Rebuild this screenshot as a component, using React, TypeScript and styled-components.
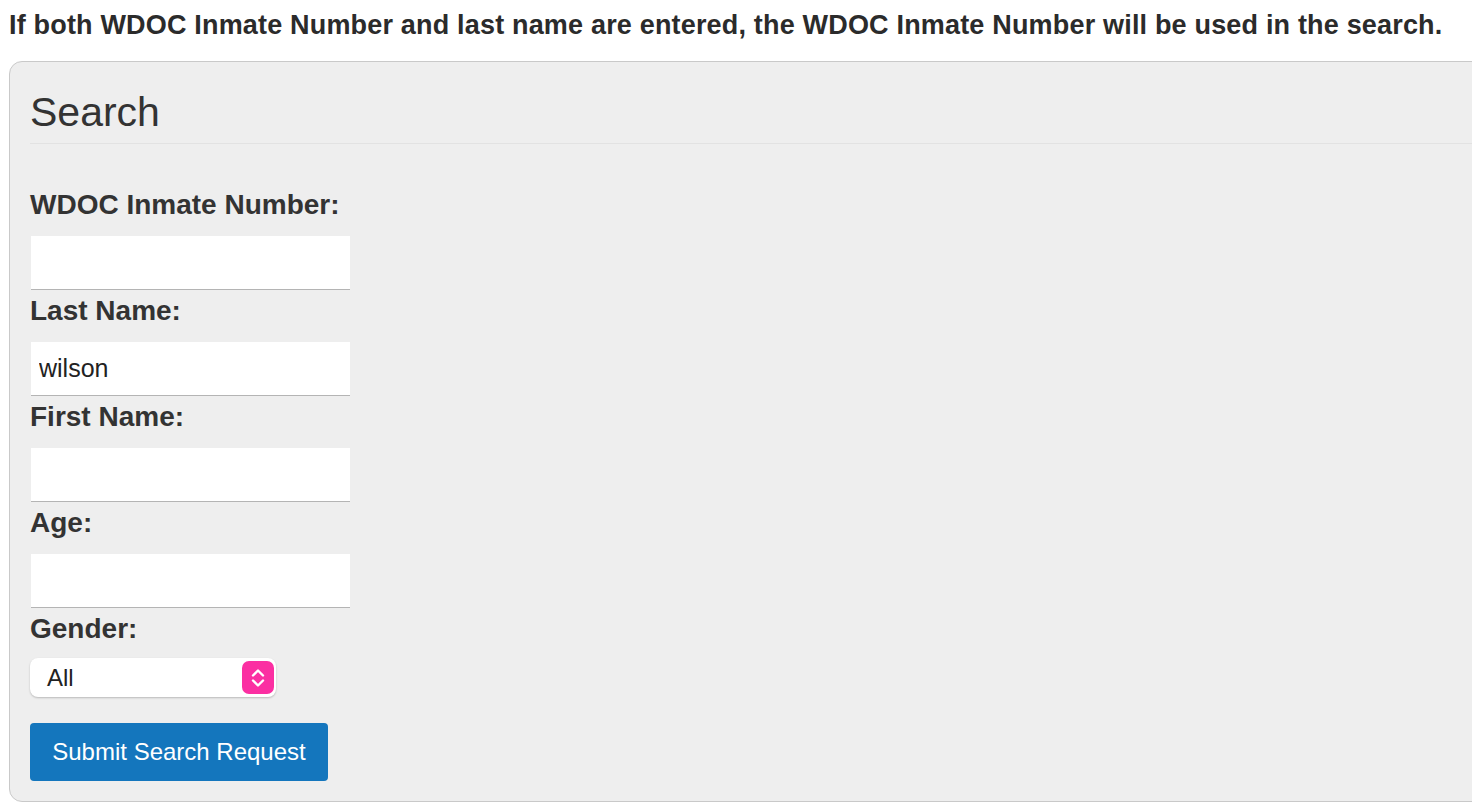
import styled, { createGlobalStyle } from 'styled-components';

const GlobalStyle = createGlobalStyle`
  html, body {
    margin: 0;
    padding: 0;
    background: #ffffff;
    overflow: hidden;
  }
  body {
    font-family: 'Liberation Sans', Helvetica, Arial, sans-serif;
    color: #333333;
  }
`;

const fields = [
  { label: 'WDOC Inmate Number:', value: '' },
  { label: 'Last Name:', value: 'wilson' },
  { label: 'First Name:', value: '' },
  { label: 'Age:', value: '' },
];

export default function App() {
  return (
    <>
      <GlobalStyle />
      <Page>
        <Intro>
          If both WDOC Inmate Number and last name are entered, the WDOC Inmate Number will be used in
          the search.
        </Intro>

        <Panel>
          <Heading>Search</Heading>

          <Form onSubmit={(e) => e.preventDefault()}>
            {fields.map((field) => (
              <Field key={field.label}>
                <Label>{field.label}</Label>
                <TextInput type='text' defaultValue={field.value} />
              </Field>
            ))}

            <Label>Gender:</Label>
            <SelectBox>
              <SelectText>All</SelectText>
              <Stepper>
                <svg width='18' height='24' viewBox='0 0 18 24' fill='none'>
                  <path d='M4 9.5 L9 4.5 L14 9.5' stroke='#fff' strokeWidth='2.4' strokeLinecap='round' strokeLinejoin='round' />
                  <path d='M4 14.5 L9 19.5 L14 14.5' stroke='#fff' strokeWidth='2.4' strokeLinecap='round' strokeLinejoin='round' />
                </svg>
              </Stepper>
            </SelectBox>

            <SubmitButton type='submit'>Submit Search Request</SubmitButton>
          </Form>
        </Panel>
      </Page>
    </>
  );
}

const Page = styled('div')`
  padding: 9px 0 0 9px;
`;

const Intro = styled('p')`
  margin: 0 0 20px;
  font-size: 27px;
  line-height: 32px;
  font-weight: 700;
  letter-spacing: 0.18px;
  color: #2b2b2b;
  white-space: nowrap;
`;

const Panel = styled('section')`
  box-sizing: border-box;
  width: calc(100% + 40px);
  height: 741px;
  padding: 28px 20px 20px;
  background: #eeeeee;
  border: 1px solid #c9c9c9;
  border-radius: 13px;
`;

const Heading = styled('h1')`
  margin: 0 0 45px;
  padding-bottom: 8px;
  font-size: 41px;
  line-height: 45px;
  font-weight: 400;
  color: #333333;
  border-bottom: 1px solid #e2e2e2;
`;

const Form = styled('form')`
  display: flex;
  flex-direction: column;
  align-items: flex-start;
`;

const Field = styled('div')`
  display: flex;
  flex-direction: column;
  margin-bottom: 5px;
`;

const Label = styled('label')`
  display: block;
  margin-bottom: 15px;
  font-size: 28px;
  line-height: 32px;
  font-weight: 700;
  color: #333333;
`;

const TextInput = styled('input')`
  box-sizing: border-box;
  width: 319px;
  height: 54px;
  margin: 0 0 0 1px;
  padding: 0 8px;
  border: none;
  border-bottom: 1px solid #b4b4b4;
  border-radius: 0;
  background: #ffffff;
  font-family: 'Liberation Sans', Helvetica, Arial, sans-serif;
  font-size: 25px;
  color: #222222;
  outline: none;
`;

const SelectBox = styled('div')`
  box-sizing: border-box;
  display: flex;
  align-items: center;
  justify-content: space-between;
  width: 246px;
  height: 39px;
  margin-top: -2px;
  padding: 0 2px 0 17px;
  background: #ffffff;
  border-radius: 8px;
  box-shadow: 0 1px 2px rgba(0, 0, 0, 0.22);
`;

const SelectText = styled('span')`
  font-size: 24px;
  color: #222222;
`;

const Stepper = styled('span')`
  display: flex;
  align-items: center;
  justify-content: center;
  width: 32px;
  height: 33px;
  border-radius: 7px;
  background: #fb2fa2;
`;

const SubmitButton = styled('button')`
  margin-top: 26px;
  width: 298px;
  height: 58px;
  padding: 0;
  border: none;
  border-radius: 4px;
  background: #1476bd;
  color: #ffffff;
  font-family: 'Liberation Sans', Helvetica, Arial, sans-serif;
  font-size: 24px;
  cursor: pointer;
`;
